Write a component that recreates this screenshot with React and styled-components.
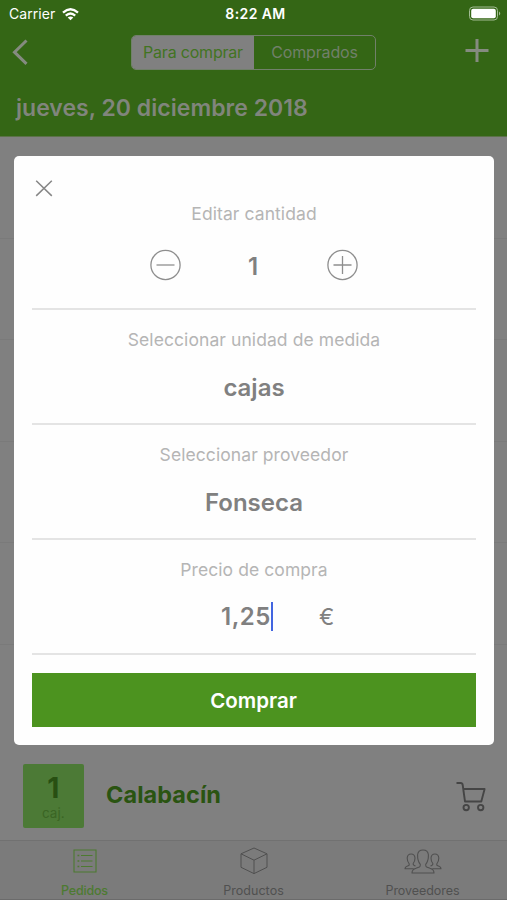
import React from "react";
import styled, { createGlobalStyle, css } from "styled-components";

const GlobalStyle = createGlobalStyle`
  * { box-sizing: border-box; }
  body { margin: 0; }
  button { font: inherit; border: 0; padding: 0; background: none; color: inherit; letter-spacing: inherit; }
`;

const Screen = styled.div`
  position: relative;
  width: 507px;
  height: 900px;
  display: flex;
  flex-direction: column;
  overflow: hidden;
  background: #808080;
  font-family: Inter, "Liberation Sans", sans-serif;
`;

const Header = styled.header`
  height: 137px;
  flex: none;
  background: #346615;
  border-bottom: 1px solid #5b7248;
  color: #858b80;
`;

const StatusBar = styled.div`
  height: 27px;
  display: grid;
  grid-template-columns: 1fr auto 1fr;
  align-items: center;
  padding: 1px 5px 0 9px;
  color: #fff;
  font-size: 14px;
  line-height: 18px;
`;

const Carrier = styled.div`
  display: flex;
  align-items: center;
  gap: 7px;
  letter-spacing: 0.05px;
`;

const Clock = styled.div`
  font-weight: 600;
  letter-spacing: 0.4px;
`;

const Battery = styled.div`
  display: flex;
  justify-content: flex-end;
  padding-bottom: 2px;
`;

const NavBar = styled.div`
  height: 50px;
  display: grid;
  grid-template-columns: 1fr 245px 1fr;
  align-items: center;
  padding: 0 17px 0 12px;
`;

const NavButton = styled.button`
  display: flex;
  justify-content: ${(p) => (p.$end ? "flex-end" : "flex-start")};
  padding-bottom: ${(p) => (p.$end ? "3px" : "0")};
`;

const Segmented = styled.div`
  height: 35px;
  margin: 0 -2.5px 0 2.5px;
  display: grid;
  grid-template-columns: 122px 1fr;
  border: 1.5px solid #71806a;
  border-radius: 5px;
  overflow: hidden;
`;

const Segment = styled.button`
  font-size: 16px;
  letter-spacing: ${(p) => (p.$active ? "-0.2px" : "-0.15px")};
  color: ${(p) => (p.$active ? "#427422" : "#71806a")};
  background: ${(p) => (p.$active ? "#808080" : "transparent")};
`;

const DayTitle = styled.h1`
  margin: 0;
  padding: 16px 16px 0;
  font-size: 23px;
  line-height: 30px;
  font-weight: 600;
  color: #80857c;
  letter-spacing: 0.03px;
`;

const List = styled.main`
  flex: 1;
  display: flex;
  flex-direction: column;
`;

const Row = styled.div`
  height: 101.5px;
  flex: none;
  display: flex;
  align-items: center;
  border-bottom: 1px solid #7a7a7a;
`;

const ProductRow = styled(Row)`
  height: 96px;
  margin-top: auto;
  padding: 8px 21px 0 22.5px;
  border: 0;
`;

const Quantity = styled.div`
  width: 61.5px;
  height: 63.5px;
  border-radius: 2px;
  background: #4c7a36;
  display: flex;
  flex-direction: column;
  align-items: center;
  color: #284f12;
`;

const Count = styled.div`
  margin-top: 9px;
  font-size: 28px;
  line-height: 30px;
  font-weight: 700;
`;

const Unit = styled.div`
  font-size: 13.5px;
  line-height: 18px;
  margin-top: 1px;
  color: #3a6524;
`;

const ProductName = styled.div`
  flex: 1;
  padding: 0 0 4px 22px;
  font-size: 23.5px;
  font-weight: 700;
  color: #2a5411;
  letter-spacing: 0.05px;
`;

const TabBar = styled.nav`
  height: 60px;
  flex: none;
  display: grid;
  grid-template-columns: repeat(3, 1fr);
  border-top: 1px solid #717171;
  border-bottom: 1px solid #6b6b6b;
  background: #7b7b7b;
`;

const Tab = styled.button`
  display: flex;
  flex-direction: column;
  align-items: center;
  color: ${(p) => (p.$active ? "#4d7a31" : "#505050")};
`;

const TabIcon = styled.span`
  height: 39px;
  display: flex;
  align-items: center;
`;

const TabLabel = styled.span`
  font-size: 12.5px;
  line-height: 16px;
  margin-top: 3px;
  font-weight: ${(p) => (p.$active ? 500 : 400)};
  letter-spacing: ${(p) => p.$spacing}px;
`;

const Dialog = styled.section`
  position: absolute;
  top: 155.5px;
  left: 13.5px;
  width: 480.5px;
  height: 589.5px;
  border-radius: 5px;
  background: #fefefe;
  padding: 0 18px 0 18.5px;
  display: flex;
  flex-direction: column;
`;

const CloseButton = styled.button`
  position: absolute;
  left: 20px;
  top: 22px;
  width: 20px;
  height: 20px;
`;

const Field = styled.div`
  height: 115px;
  flex: none;
  display: flex;
  flex-direction: column;
  align-items: center;
  padding-top: 17.5px;
  border-bottom: 2px solid #e4e4e4;
  ${(p) =>
    p.$first &&
    css`
      height: 154.5px;
      padding-top: 46px;
    `}
`;

const Label = styled.div`
  font-size: 17.5px;
  line-height: 24px;
  color: #b5b5b5;
  letter-spacing: 0.08px;
`;

const Value = styled.div`
  margin-top: 21px;
  font-size: 24px;
  line-height: 30px;
  font-weight: 600;
  color: #808080;
`;

const Stepper = styled.div`
  margin-top: 23px;
  display: grid;
  grid-template-columns: 32px 145px 32px;
  align-items: center;
  justify-items: center;
  height: 32px;
  color: #808080;
  font-size: 24px;
  font-weight: 600;
`;

const StepCount = styled.span`
  padding: 3px 2px 0 0;
`;

const StepButton = styled.button`
  height: 32px;
`;

const Price = styled.div`
  margin-top: 20px;
  width: 100%;
  display: grid;
  grid-template-columns: 189px 52px 1fr;
  align-items: center;
  height: 30px;
  color: #808080;
  font-size: 24px;
  font-weight: 600;
`;

const Amount = styled.div`
  grid-column: 2;
  display: flex;
  align-items: center;
  letter-spacing: 0.5px;
`;

const Caret = styled.span`
  width: 2.5px;
  height: 29px;
  flex: none;
  background: #4265e0;
`;

const Currency = styled.span`
  padding-left: 46px;
  font-weight: 400;
  font-size: 23px;
`;

const BuyButton = styled.button`
  height: 54px;
  margin-top: 17.5px;
  padding: 2px 1px 0 0;
  flex: none;
  background: #4c931f;
  color: #fff;
  font-size: 20.5px;
  font-weight: 600;
`;

const Stroke = styled.svg.attrs({ fill: "none", stroke: "currentColor" })`
  display: block;
`;

const WifiIcon = () => (
  <Stroke width="17" height="13" viewBox="0 0 17 13" strokeWidth="2.3">
    <path d="M1 4.6Q8.5-2 16 4.6M3.8 7.7Q8.5 3.4 13.2 7.7" />
    <path d="M8.5 12.3 5.7 9.5Q8.5 7.3 11.3 9.5Z" fill="currentColor" stroke="none" />
  </Stroke>
);

const BatteryIcon = () => (
  <Stroke width="33" height="15" viewBox="0 0 33 15">
    <rect x="0.5" y="1" width="28" height="13" rx="3.5" stroke="#a3bc94" />
    <rect x="2.2" y="2.7" width="24.6" height="9.6" rx="2" fill="#fff" stroke="none" />
    <path d="M30 5.5Q32.5 7.5 30 9.5Z" fill="#a3bc94" stroke="none" />
  </Stroke>
);

const BackIcon = () => (
  <Stroke width="17" height="26" viewBox="0 0 17 26" strokeWidth="3">
    <path d="M14.5 1.5 2.5 13.2 14.5 24.8" />
  </Stroke>
);

const AddIcon = () => (
  <Stroke width="25" height="25" viewBox="0 0 25 25" strokeWidth="3">
    <path d="M12 1V24M.5 12.5H23.5" />
  </Stroke>
);

const CloseIcon = () => (
  <Stroke width="20" height="20" viewBox="0 0 20 20" strokeWidth="1.5" color="#868686">
    <path d="m2.2 2.7 15.6 15.2M17.8 2.7 2.2 17.9" />
  </Stroke>
);

const StepIcon = ({ plus }) => (
  <Stroke width="32" height="32" viewBox="0 0 32 32" strokeWidth="1.3" color="#8e8e8e">
    <circle cx="15.5" cy="16" r="14.6" />
    <path d={plus ? "M6.5 16H24.5M15.5 7V25" : "M6.5 16H24.5"} />
  </Stroke>
);

const CartIcon = () => (
  <Stroke width="30" height="31" viewBox="0 0 30 31" strokeWidth="1.9" color="#454545">
    <path d="M.5 2H4.8Q6.4 2 6.7 4L9 20.5H25.3L28.6 8H7.3" strokeLinejoin="round" />
    <circle cx="10.2" cy="26.6" r="2.7" />
    <circle cx="24.7" cy="26.6" r="2.7" />
  </Stroke>
);

const OrdersIcon = () => (
  <Stroke width="24" height="24" viewBox="0 0 24 24" strokeWidth="1.1">
    <path d="M1 1H23V23H1ZM8 6.5H19.5M8 12H19.5M8 17.5H19.5" />
    <path d="M4.5 6.5H6.3M4.5 12H6.3M4.5 17.5H6.3" strokeWidth="1.7" />
  </Stroke>
);

const BoxIcon = () => (
  <Stroke width="28" height="28" viewBox="0 0 28 28" strokeWidth="1">
    <path d="M14 1 27 6.8V20.3L14 26.6 1 20.3V6.8ZM1 6.8 14 13.2 27 6.8M14 13.2V26.6" strokeLinejoin="round" />
  </Stroke>
);

const PeopleIcon = () => (
  <Stroke width="38" height="26" viewBox="0 0 38 26" strokeWidth="1.1" strokeLinejoin="round">
    <path d="M8 25Q8 21.5 12 20.3L15.4 19Q16.5 18.3 16.3 16.3C14.2 14 13.5 10 13.6 6.8Q14.1 2 19 2T24.4 6.8C24.5 10 23.8 14 21.7 16.3Q21.5 18.3 22.6 19L26 20.3Q30 21.5 30 25Z" />
    <path d="M9.7 20.8H1Q1 18.8 4.1 17.8Q5.8 17.3 5 15.5Q3.2 13.5 3.2 10Q3.5 6 7.1 6T11 10Q11 13.5 9.2 15.5Q8.7 17.1 11.5 18.1" />
    <path d="M28.3 20.8H37Q37 18.8 33.9 17.8Q32.2 17.3 33 15.5Q34.8 13.5 34.8 10Q34.5 6 30.9 6T27 10Q27 13.5 28.8 15.5Q29.3 17.1 26.5 18.1" />
  </Stroke>
);

const tabs = [
  { name: "Pedidos", Icon: OrdersIcon, active: true, spacing: -0.2 },
  { name: "Productos", Icon: BoxIcon, spacing: 0.05 },
  { name: "Proveedores", Icon: PeopleIcon, spacing: -0.05 },
];

export default function App() {
  return (
    <Screen>
      <GlobalStyle />
      <Header>
        <StatusBar>
          <Carrier>Carrier<WifiIcon /></Carrier>
          <Clock>8:22 AM</Clock>
          <Battery><BatteryIcon /></Battery>
        </StatusBar>
        <NavBar>
          <NavButton aria-label="Atrás"><BackIcon /></NavButton>
          <Segmented>
            <Segment $active>Para comprar</Segment>
            <Segment>Comprados</Segment>
          </Segmented>
          <NavButton $end aria-label="Añadir"><AddIcon /></NavButton>
        </NavBar>
        <DayTitle>jueves, 20 diciembre 2018</DayTitle>
      </Header>
      <List>
        <Row /><Row /><Row /><Row /><Row />
        <ProductRow>
          <Quantity><Count>1</Count><Unit>caj.</Unit></Quantity>
          <ProductName>Calabacín</ProductName>
          <CartIcon />
        </ProductRow>
      </List>
      <TabBar>
        {tabs.map(({ name, Icon, active, spacing }) => (
          <Tab key={name} $active={active}>
            <TabIcon><Icon /></TabIcon>
            <TabLabel $active={active} $spacing={spacing}>{name}</TabLabel>
          </Tab>
        ))}
      </TabBar>
      <Dialog role="dialog">
        <CloseButton aria-label="Cerrar"><CloseIcon /></CloseButton>
        <Field $first>
          <Label>Editar cantidad</Label>
          <Stepper>
            <StepButton aria-label="Menos"><StepIcon /></StepButton>
            <StepCount>1</StepCount>
            <StepButton aria-label="Más"><StepIcon plus /></StepButton>
          </Stepper>
        </Field>
        <Field>
          <Label>Seleccionar unidad de medida</Label>
          <Value>cajas</Value>
        </Field>
        <Field>
          <Label>Seleccionar proveedor</Label>
          <Value>Fonseca</Value>
        </Field>
        <Field>
          <Label>Precio de compra</Label>
          <Price>
            <Amount>1,25<Caret /></Amount>
            <Currency>€</Currency>
          </Price>
        </Field>
        <BuyButton>Comprar</BuyButton>
      </Dialog>
    </Screen>
  );
}
